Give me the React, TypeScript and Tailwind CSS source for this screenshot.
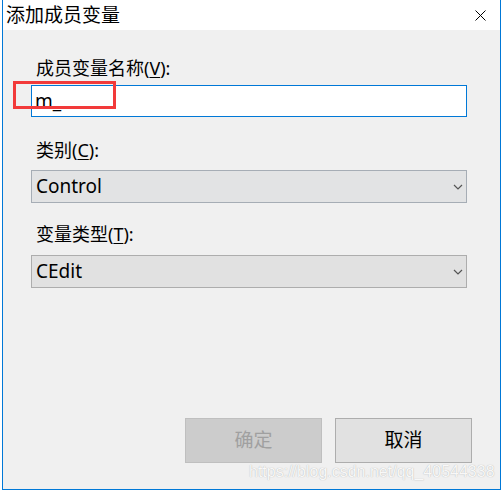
import React from "react";

const font = "font-['Noto_Sans','Noto_Sans_CJK_SC',sans-serif]";

function Chevron() {
  return (
    <svg width="10" height="6" viewBox="0 0 10 6" className="absolute left-[421px] top-[13px]">
      <path d="M1 1 L5 5 L9 1" fill="none" stroke="#555" strokeWidth="1.2" />
    </svg>
  );
}

export default function App() {
  return (
    <div className={`relative w-[503px] h-[492px] bg-white overflow-hidden ${font}`}>
      <div className="ml-[2px] w-[499px] h-[490px] border-x border-b border-[#0078d7] flex flex-col">
        <div className="h-[30px] bg-white flex items-center justify-between shrink-0">
          <span className="ml-[3px] text-[19px] leading-[30px] text-black">添加成员变量</span>
          <svg width="11" height="11" viewBox="0 0 11 11" className="mr-[14px]">
            <path d="M0.5 0.5 L10.5 10.5 M10.5 0.5 L0.5 10.5" stroke="#000" strokeWidth="1" />
          </svg>
        </div>
        <div className="flex-1 bg-[#f0f0f0] flex flex-col pl-[28px]">
          <div className="mt-[26px] h-[24px] text-[18px] leading-[24px] text-black pl-[5px]">
            成员变量名称(<span className="underline underline-offset-2">V</span>):
          </div>
          <div className="mt-[5px] w-[436px] h-[32px] border border-[#0078d7] bg-white flex items-center pl-[3px] text-[19px] text-black">
            m_
          </div>
          <div className="mt-[21px] h-[24px] text-[18px] leading-[24px] text-black pl-[5px]">
            类别(<span className="underline underline-offset-2">C</span>):
          </div>
          <div className="relative mt-[8px] w-[436px] h-[33px] border border-[#a6adb5] bg-[#e2e3e4] flex items-center pl-[4px] text-[19px] text-black">
            Control
            <Chevron />
          </div>
          <div className="mt-[19px] h-[24px] text-[18px] leading-[24px] text-black pl-[5px]">
            变量类型(<span className="underline underline-offset-2">T</span>):
          </div>
          <div className="relative mt-[9px] w-[436px] h-[33px] border border-[#adadad] bg-[#e1e1e1] flex items-center pl-[4px] text-[19px] text-black">
            CEdit
            <Chevron />
          </div>
          <div className="mt-[130px] flex gap-[13px] pl-[154px]">
            <div className="w-[137px] h-[45px] border border-[#bfbfbf] bg-[#cccccc] flex items-center justify-center text-[19px] text-[#a0a0a0]">
              确定
            </div>
            <div className="w-[137px] h-[45px] border border-[#adadad] bg-[#e1e1e1] flex items-center justify-center text-[19px] text-black">
              取消
            </div>
          </div>
        </div>
      </div>
      <div className="absolute left-[13px] top-[81px] w-[103px] h-[28px] border-[3px] border-[#f23a3a]" />
      <div className="absolute left-[249px] top-[461px] text-[16px] leading-[22px] font-['Liberation_Sans',sans-serif] text-[#f8f8f8] [text-shadow:0_0_1px_#a8a8a8]">
        https://blog.csdn.net/qq_40544338
      </div>
    </div>
  );
}
